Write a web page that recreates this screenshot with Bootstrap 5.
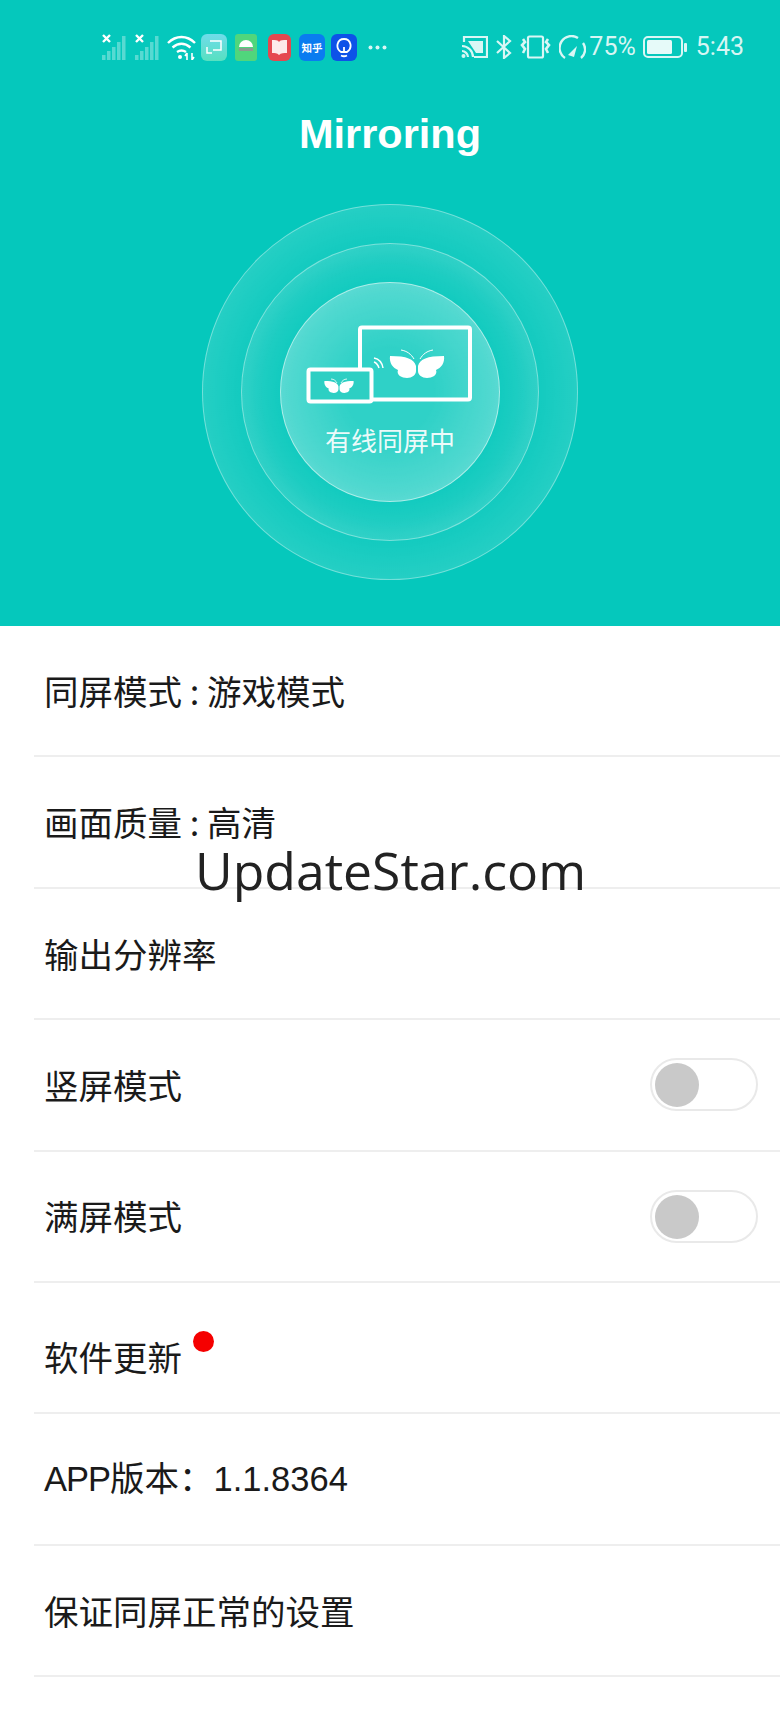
<!DOCTYPE html>
<html lang="zh-CN">
<head>
  <meta charset="UTF-8">
  <meta name="viewport" content="width=device-width, initial-scale=1.0">
  <title>Mirroring</title>
  <link href="https://cdn.jsdelivr.net/npm/bootstrap@5.3.0/dist/css/bootstrap.min.css" rel="stylesheet">
  <style>
    body {
      background-color: #fff;
      font-family: "Liberation Sans", "Noto Sans CJK SC", sans-serif;
      width: 780px;
      height: 1733px;
      overflow: hidden;
    }
    .page-wrap { position: relative; height: 1733px; }
    .hero { background-color: #05c8bc; height: 626px; color: #fff; }
    .status-bar {
      height: 94px;
      padding: 0 36px 0 102px;
      font-family: Roboto, sans-serif;
      font-size: 25px;
      color: rgba(255, 255, 255, .85);
    }
    .status-bar svg { display: block; flex-shrink: 0; }
    .app-tile {
      width: 26px;
      height: 27px;
      border-radius: 6px;
      font-size: 10.500px;
      line-height: 27px;
      text-align: center;
      font-weight: 700;
      color: #fff;
      font-family: "Noto Sans CJK SC", sans-serif;
      flex-shrink: 0;
    }
    .hero-title { height: 80px; line-height: 80px; font-size: 41.500px; font-weight: 700; text-align: center; }
    .ring {
      border-radius: 50%;
      border: 1.500px solid rgba(255, 255, 255, .36);
      background-image: radial-gradient(closest-side, rgba(255, 255, 255, .02) 68%, rgba(255, 255, 255, .13) 100%);
    }
    .ring-outer { width: 376px; height: 376px; margin-top: 30px; }
    .ring-mid { width: 298px; height: 298px; }
    .ring-inner {
      width: 220px;
      height: 220px;
      padding-top: 38px;
      border-color: rgba(255, 255, 255, .5);
      background-image: radial-gradient(closest-side, rgba(255, 255, 255, .14) 40%, rgba(255, 255, 255, .3) 100%);
    }
    .ring-label { font-size: 26px; line-height: 36px; margin-top: 16px; color: rgba(255, 255, 255, .92); font-family: "Noto Sans CJK SC", sans-serif; }
    .setting-list { margin-left: 34px; }
    .setting-row {
      height: 131.400px;
      padding: 0 22px 0 10px;
      border-bottom: 2px solid #eeeeee;
      font-family: "Noto Sans CJK SC", sans-serif;
      font-size: 34.500px;
      color: #1a1a1a;
    }
    .setting-row .latin { font-family: "Liberation Sans", "Noto Sans CJK SC", sans-serif; margin-top: 2px; }
    .setting-row .latin-caps { letter-spacing: -1px; }
    .toggle-track {
      width: 108px;
      height: 53px;
      border: 2px solid #e9e9e9;
      border-radius: 27px;
      padding: 3px;
      background-color: #fff;
    }
    .toggle-knob { width: 44px; height: 44px; border-radius: 50%; background-color: #c9c9c9; }
    .update-label { height: 51px; line-height: 51px; margin-top: 18px; }
    .red-dot {
      position: absolute;
      left: 149px;
      top: 0;
      width: 21px;
      height: 21px;
      border-radius: 50%;
      background-color: #f50000;
    }
    .site-mark {
      position: absolute;
      left: 195px;
      top: 830px;
      font-family: "Open Sans", sans-serif;
      font-size: 51.700px;
      line-height: 80px;
      color: #222;
    }
  </style>
</head>
<body>

<div class="page-wrap">
  <div class="hero">
    <!-- status bar -->
    <div class="status-bar d-flex align-items-center">
      <svg width="25" height="27" viewBox="0 0 25 27"><path d="M1 1l7 7M8 1l-7 7" stroke="#fff" stroke-width="2.400"/><g fill="rgba(255,255,255,.33)"><rect x="0" y="21" width="3.500" height="5"/><rect x="5" y="17" width="3.500" height="9"/><rect x="10" y="13" width="3.500" height="13"/><rect x="15" y="8" width="3.500" height="18"/><rect x="20" y="2" width="3.500" height="24"/></g></svg>
      <svg class="ms-2" width="25" height="27" viewBox="0 0 25 27"><path d="M1 1l7 7M8 1l-7 7" stroke="#fff" stroke-width="2.400"/><g fill="rgba(255,255,255,.33)"><rect x="0" y="21" width="3.500" height="5"/><rect x="5" y="17" width="3.500" height="9"/><rect x="10" y="13" width="3.500" height="13"/><rect x="15" y="8" width="3.500" height="18"/><rect x="20" y="2" width="3.500" height="24"/></g></svg>
      <svg style="margin-left:7px" width="29" height="26" viewBox="0 0 29 26" fill="none" stroke="#fff" stroke-width="2.400"><path d="M1 9c8-8 19-8 27 0M5.500 13.500c6-5 12-5 18 0M10 18c3-2 6-2 9 0"/><circle cx="13" cy="23" r="2" fill="#fff" stroke="none"/><path d="M20 19v7M25 19v7M18 22l2-3M27 23l-2 3" stroke-width="1.600"/></svg>
      <div class="app-tile" style="margin-left:5px;background:linear-gradient(#6fdcea,#58e0c0)"><svg class="mx-auto mt-1" width="20" height="18" viewBox="0 0 20 18" fill="none" stroke="#fff" stroke-width="1.500"><path d="M6 3h11v9h-8M3 9v6h5"/></svg></div>
      <div class="app-tile" style="margin-left:8px;width:22px;border-radius:3px;background:#50d67c"><svg class="mx-auto mt-1" width="16" height="18" viewBox="0 0 16 18"><path d="M1 9a7 7 0 0 1 14 0z" fill="#fff"/><rect x="1" y="10" width="14" height="3" fill="#8a9b90"/></svg></div>
      <div class="app-tile" style="margin-left:11px;width:23px;background:#e5484f"><svg class="mx-auto mt-1" width="17" height="18" viewBox="0 0 17 18"><path d="M1 2c3 0 6 0 7 2 1-2 4-2 8-2v13c-3 0-6 0-8 2-2-2-4-2-7-2z" fill="#fdeaea"/></svg></div>
      <div class="app-tile" style="margin-left:8px;background:#0a7cf0">知乎</div>
      <div class="app-tile" style="margin-left:6px;background:#0d52e8"><svg class="mx-auto mt-1" width="16" height="20" viewBox="0 0 16 20" fill="none" stroke="#fff" stroke-width="1.800"><path d="M5 14c-6-4-4-13 3-13s9 9 3 13zM5 17.500c2 1 4 1 6 0M8 14V9"/></svg></div>
      <svg style="margin-left:11px" width="19" height="5" viewBox="0 0 19 5" fill="rgba(255,255,255,.85)"><circle cx="2.500" cy="2.500" r="2"/><circle cx="9.500" cy="2.500" r="2"/><circle cx="16.500" cy="2.500" r="2"/></svg>

      <svg class="ms-auto" width="27" height="24" viewBox="0 0 27 24" fill="none" stroke="currentColor" stroke-width="2.200"><path d="M3 7V2h23v20H13"/><path d="M7 6h15v12h-7" fill="currentColor" stroke="none"/><path d="M1 11c6 0 11 5 11 11M1 16c3 0 6 3 6 6"/><circle cx="2.500" cy="21" r="2" fill="currentColor" stroke="none"/></svg>
      <svg style="margin-left:8px" width="16" height="24" viewBox="0 0 16 24" fill="none" stroke="currentColor" stroke-width="2.200"><path d="M1 6l13 12-6 5V1l6 5L1 18"/></svg>
      <svg style="margin-left:8px" width="31" height="24" viewBox="0 0 31 24" fill="none" stroke="currentColor" stroke-width="2.200"><rect x="8" y="1.500" width="15" height="21" rx="1.500"/><path d="M3 4l2 3-3 3 3 4-2 4M28 4l-2 3 3 3-3 4 2 4" stroke-width="2.600"/></svg>
      <svg style="margin-left:8px" width="27" height="25" viewBox="0 0 27 25" fill="none" stroke="currentColor" stroke-width="2.400"><path d="M6 23A11 11 0 0 1 19 3"/><path d="M24 8a11 11 0 0 1-2 15"/><path d="M9 20l9-9-3 11z" fill="currentColor" stroke="none"/></svg>
      <span style="margin-left:3px">75%</span>
      <svg style="margin-left:7px" width="45" height="24" viewBox="0 0 45 24"><rect x="1" y="2" width="38" height="20" rx="4" fill="none" stroke="currentColor" stroke-width="2"/><rect x="4" y="5" width="25" height="14" rx="1.500" fill="rgba(255,255,255,.9)"/><rect x="41" y="8" width="3" height="9" rx="1" fill="currentColor"/></svg>
      <span style="margin-left:8px">5:43</span>
    </div>

    <div class="hero-title">Mirroring</div>

    <div class="ring ring-outer d-flex align-items-center justify-content-center mx-auto">
      <div class="ring ring-mid d-flex align-items-center justify-content-center">
        <div class="ring ring-inner d-flex flex-column align-items-center">
          <!-- phone and tv -->
          <svg width="180" height="85" viewBox="300 320 180 85" class="flex-shrink-0">
            <defs>
              <path id="flyPath" d="M-1 -1C-3 -8 -10 -11 -27 -11C-28 -4 -24 1 -19 3C-21 8 -15 11 -10 11C-5 11 -1 8 -1 4ZM1 -1C3 -8 10 -11 27 -11C28 -4 24 1 19 3C21 8 15 11 10 11C5 11 1 8 1 4Z"/>
            </defs>
            <rect x="360" y="326.500" width="110" height="72" rx="2" fill="none" stroke="#fff" stroke-width="4"/>
            <rect x="308.500" y="368.500" width="63" height="32" rx="2" fill="#2dcfc3" stroke="#fff" stroke-width="4"/>
            <use href="#flyPath" transform="translate(417 366)" fill="#fff"/>
            <path d="M401 349c6 1 10 4 13 9M433 349c-6 1-10 4-13 9" fill="none" stroke="#fff" stroke-width="1"/>
            <use href="#flyPath" transform="translate(339 386) scale(.54)" fill="#fff"/>
            <path d="M331 378c3 0 5 2 6 4M347 378c-3 0-5 2-6 4" fill="none" stroke="#fff" stroke-width=".8"/>
            <path d="M374 361c3 1 4 3 5 6M374 357c5 1 8 4 9 10" fill="none" stroke="#fff" stroke-width="1.500"/>
          </svg>
          <div class="ring-label">有线同屏中</div>
        </div>
      </div>
    </div>
  </div>

  <div class="setting-list">
    <div class="setting-row d-flex align-items-center">同屏模式 : 游戏模式</div>
    <div class="setting-row d-flex align-items-center">画面质量 : 高清</div>
    <div class="setting-row d-flex align-items-center">输出分辨率</div>
    <div class="setting-row d-flex align-items-center justify-content-between">
      <span>竖屏模式</span>
      <div class="toggle-track"><div class="toggle-knob"></div></div>
    </div>
    <div class="setting-row d-flex align-items-center justify-content-between">
      <span>满屏模式</span>
      <div class="toggle-track"><div class="toggle-knob"></div></div>
    </div>
    <div class="setting-row d-flex align-items-center">
      <span class="position-relative d-block update-label">软件更新<span class="red-dot"></span></span>
    </div>
    <div class="setting-row d-flex align-items-center"><span class="latin"><span class="latin-caps">APP</span>版本：1.1.8364</span></div>
    <div class="setting-row d-flex align-items-center">保证同屏正常的设置</div>
  </div>

  <div class="site-mark">UpdateStar.com</div>
</div>

<script src="https://cdn.jsdelivr.net/npm/bootstrap@5.3.0/dist/js/bootstrap.bundle.min.js"></script>
</body>
</html>
